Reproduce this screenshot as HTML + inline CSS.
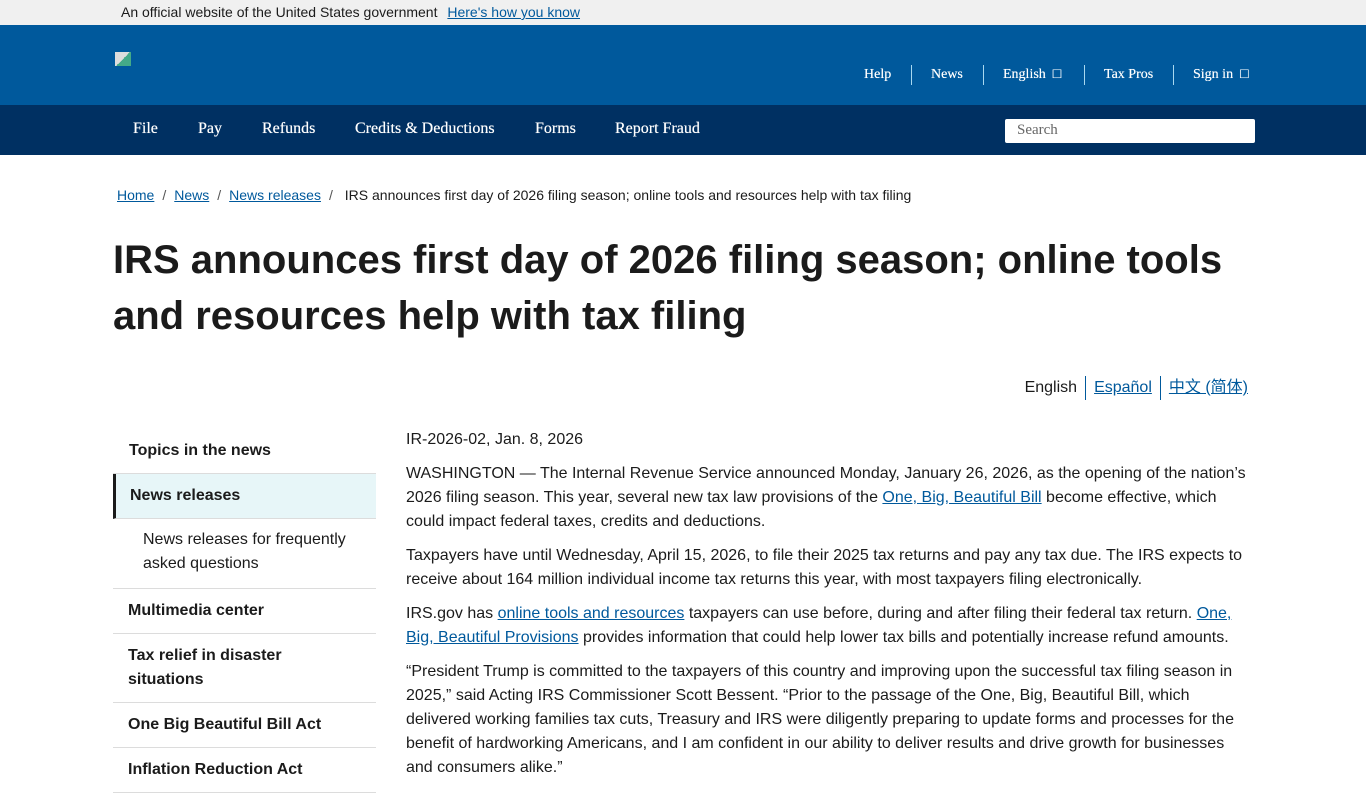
<!DOCTYPE html>
<html><head><meta charset="utf-8"><style>
*{box-sizing:border-box;margin:0;padding:0}
body{width:1366px;height:768px;overflow:hidden;font-family:"Liberation Sans",Arial,sans-serif;color:#1b1b1b;background:#fff}
a{color:#00599c}
.gov{height:25px;background:#f0f0f0;font-size:14px;line-height:25px;padding-left:121px;color:#1b1b1b}
.gov a{margin-left:6px;color:#00599c}
.hdr{height:80px;background:#00599c;position:relative}
.logo{position:absolute;left:115px;top:27px;width:16px;height:14px;background:linear-gradient(135deg,#ddd 50%,#4a8 50%)}
.util{position:absolute;font-family:"Liberation Serif",serif;font-size:14px;color:#fff;line-height:20px;text-shadow:0 0 0.4px #fff}
.util span{position:absolute;white-space:nowrap}
.util b{position:absolute;width:1px;height:20px;background:#a8d8f0;top:0}
.nav{height:50px;background:#003062;position:relative;font-family:"Liberation Serif",serif;color:#fff;font-size:16px;text-shadow:0 0 0.5px #fff}
.nav .it{position:absolute;top:15px}
.search{position:absolute;left:1005px;top:14px;width:250px;height:24px;background:#fff;border-radius:2px;color:#666;font-size:15px;padding:3px 12px;text-shadow:none}
.bc{position:absolute;top:187px;left:117px;font-size:14px;color:#1b1b1b}
.bc a{color:#00599c}
.bc i{font-style:normal;margin:0 8px;color:#555}
h1{position:absolute;left:113px;top:232px;width:1160px;font-size:40px;line-height:56px;font-weight:bold;color:#1b1b1b}
.lang{position:absolute;right:118px;top:376px;font-size:16px;display:flex;line-height:24px}
.lang span{padding:0 8px;border-left:1px solid #00599c}
.lang span:first-child{border:none}
.lang span:last-child{padding-right:0}
.side{position:absolute;left:113px;top:429px;width:263px}
.side div{font-weight:bold;font-size:16px;line-height:24px;border-bottom:1px solid #dcdcdc;padding:10px 15px}
.side .act{background:#e7f6f8;border-left:3px solid #1b1b1b;padding-left:14px}
.side .sub{font-weight:normal;padding:9px 30px 12px}
.main{position:absolute;left:406px;top:428px;width:842px;font-size:16px;line-height:24px}
.main p{margin-bottom:10px}
</style></head><body>
<div class="gov">An official website of the United States government <a href="#">Here's how you know</a></div>
<div class="hdr"><div class="logo"></div>
<div class="util" style="left:0;top:40px">
<span style="left:864px">Help</span><b style="left:911px"></b>
<span style="left:931px">News</span><b style="left:983px"></b>
<span style="left:1003px">English &nbsp;&#9633;</span><b style="left:1084px"></b>
<span style="left:1104px">Tax Pros</span><b style="left:1173px"></b>
<span style="left:1193px">Sign in &nbsp;&#9633;</span></div></div>
<div class="nav">
<span class="it" style="left:133px">File</span><span class="it" style="left:198px">Pay</span><span class="it" style="left:262px">Refunds</span><span class="it" style="left:355px">Credits &amp; Deductions</span><span class="it" style="left:535px">Forms</span><span class="it" style="left:615px">Report Fraud</span>
<div class="search">Search</div></div>
<div class="bc"><a href="#">Home</a><i>/</i><a href="#">News</a><i>/</i><a href="#">News releases</a><i>/</i> IRS announces first day of 2026 filing season; online tools and resources help with tax filing</div>
<h1>IRS announces first day of 2026 filing season; online tools and resources help with tax filing</h1>
<div class="lang"><span>English</span><span><a href="#">Español</a></span><span><a href="#">中文 (简体)</a></span></div>
<div class="side">
<div style="padding-left:16px">Topics in the news</div>
<div class="act">News releases</div>
<div class="sub">News releases for frequently asked questions</div>
<div>Multimedia center</div>
<div>Tax relief in disaster situations</div>
<div>One Big Beautiful Bill Act</div>
<div>Inflation Reduction Act</div>
</div>
<div class="main">
<p>IR-2026-02, Jan. 8, 2026</p>
<p>WASHINGTON — The Internal Revenue Service announced Monday, January 26, 2026, as the opening of the nation’s 2026 filing season. This year, several new tax law provisions of the <a href="#">One, Big, Beautiful Bill</a> become effective, which could impact federal taxes, credits and deductions.</p>
<p>Taxpayers have until Wednesday, April 15, 2026, to file their 2025 tax returns and pay any tax due. The IRS expects to receive about 164 million individual income tax returns this year, with most taxpayers filing electronically.</p>
<p>IRS.gov has <a href="#">online tools and resources</a> taxpayers can use before, during and after filing their federal tax return. <a href="#">One, Big, Beautiful Provisions</a> provides information that could help lower tax bills and potentially increase refund amounts.</p>
<p>“President Trump is committed to the taxpayers of this country and improving upon the successful tax filing season in 2025,” said Acting IRS Commissioner Scott Bessent. “Prior to the passage of the One, Big, Beautiful Bill, which delivered working families tax cuts, Treasury and IRS were diligently preparing to update forms and processes for the benefit of hardworking Americans, and I am confident in our ability to deliver results and drive growth for businesses and consumers alike.”</p>
</div>
</body></html>
